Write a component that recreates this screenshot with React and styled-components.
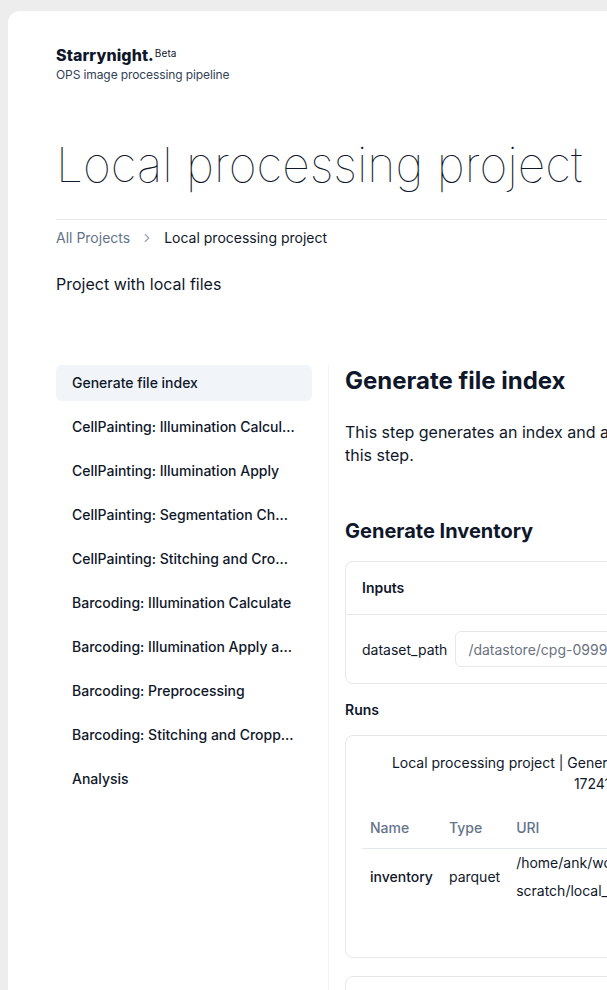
import React from 'react'
import styled, { createGlobalStyle } from 'styled-components'

const GlobalStyle = createGlobalStyle`
    html, body {
        margin: 0;
        padding: 0;
        background: #ededed;
        overflow: hidden;
    }
    body {
        font-family: Inter, "Noto Sans", sans-serif;
        color: #0f172a;
        -webkit-font-smoothing: antialiased;
    }
    * {
        box-sizing: border-box;
    }
`

const steps = [
    'Generate file index',
    'CellPainting: Illumination Calculate',
    'CellPainting: Illumination Apply',
    'CellPainting: Segmentation Check',
    'CellPainting: Stitching and Cropping',
    'Barcoding: Illumination Calculate',
    'Barcoding: Illumination Apply and Align',
    'Barcoding: Preprocessing',
    'Barcoding: Stitching and Cropping',
    'Analysis',
]

function ChevronRight() {
    return (
        <svg width="14" height="14" viewBox="0 0 24 24" fill="none" stroke="currentColor" strokeWidth="2" strokeLinecap="round" strokeLinejoin="round">
            <path d="m9 18 6-6-6-6" />
        </svg>
    )
}

function App() {
    return (
        <Page>
            <GlobalStyle />
            <Shell>
                <Brand>
                    <h1>Starrynight.<sup>Beta</sup></h1>
                    <p>OPS image processing pipeline</p>
                </Brand>

                <Title>Local processing project</Title>

                <Breadcrumb>
                    <a>All Projects</a>
                    <span className="sep"><ChevronRight /></span>
                    <span className="current">Local processing project</span>
                </Breadcrumb>

                <Description>Project with local files</Description>

                <Layout>
                    <Sidebar>
                        {steps.map((s, i) => (
                            <StepItem key={s} active={i === 0}>{s}</StepItem>
                        ))}
                    </Sidebar>

                    <Main>
                        <h2>Generate file index</h2>
                        <p className="intro">
                            This step generates an index and an inventory of dataset files for<br />
                            this step.
                        </p>

                        <h3>Generate Inventory</h3>

                        <Card>
                            <CardHeader>Inputs</CardHeader>
                            <InputRow>
                                <label>dataset_path</label>
                                <Field placeholder="/datastore/cpg-0999-local-project/images" readOnly />
                            </InputRow>
                        </Card>

                        <SectionLabel>Runs</SectionLabel>

                        <RunCard>
                            <Caption>
                                <span>Local processing project | Generate file index | Generate Inventory</span>
                                <span>1724171837</span>
                            </Caption>
                            <RunTable>
                                <thead>
                                    <tr>
                                        <th>Name</th>
                                        <th>Type</th>
                                        <th>URI</th>
                                    </tr>
                                </thead>
                                <tbody>
                                    <tr>
                                        <td className="name">inventory</td>
                                        <td>parquet</td>
                                        <td>/home/ank/workspace/starrynight-scratch/local_processing_project/index/inventory.parquet</td>
                                    </tr>
                                </tbody>
                            </RunTable>
                        </RunCard>

                        <RunCard />
                    </Main>
                </Layout>
            </Shell>
        </Page>
    )
}

const Page = styled.div`
    padding: 11px 0 0 8px;
    width: 1400px;
`

const Shell = styled.div`
    width: 1200px;
    min-height: 1100px;
    background: #ffffff;
    border-radius: 12px 12px 0 0;
    padding: 32px 48px 48px;
`

const Brand = styled.div`
    h1 {
        margin: 0;
        font-size: 16px;
        line-height: 24px;
        font-weight: 800;
        color: #0f172a;
        letter-spacing: 0.1px;
    }
    sup {
        font-size: 10px;
        font-weight: 400;
        margin-left: 1px;
        vertical-align: 4px;
        line-height: 0;
    }
    p {
        margin: 0;
        font-size: 12px;
        line-height: 16px;
        color: #334155;
        letter-spacing: -0.1px;
    }
`

const Title = styled.h1`
    margin: 58px 0 0;
    padding-bottom: 30px;
    font-size: 48px;
    line-height: 48px;
    font-weight: 100;
    color: #0f172a;
    border-bottom: 1px solid #e5e7eb;
`

const Breadcrumb = styled.nav`
    display: flex;
    align-items: center;
    gap: 10px;
    margin-top: 8px;
    font-size: 14px;
    line-height: 20px;
    a {
        color: #64748b;
    }
    .sep {
        display: flex;
        color: #94a3b8;
    }
    .current {
        color: #0f172a;
    }
`

const Description = styled.p`
    margin: 24px 0 0;
    font-size: 16px;
    line-height: 24px;
    color: #0f172a;
`

const Layout = styled.div`
    display: flex;
    margin-top: 69px;
`

const Sidebar = styled.nav`
    width: 256px;
    flex-shrink: 0;
    display: flex;
    flex-direction: column;
    gap: 8px;
    margin-right: 16px;
`

const StepItem = styled.div`
    height: 36px;
    line-height: 36px;
    padding: 0 16px;
    border-radius: 6px;
    font-size: 14px;
    font-weight: 500;
    color: #0f172a;
    background: ${props => (props.active ? '#f1f5f9' : 'transparent')};
    white-space: nowrap;
    overflow: hidden;
    text-overflow: ellipsis;
`

const Main = styled.main`
    width: 550px;
    border-left: 1px solid #f1f5f9;
    padding-left: 16px;
    min-height: 700px;
    h2 {
        margin: 0;
        font-size: 24px;
        line-height: 32px;
        font-weight: 700;
    }
    .intro {
        margin: 24px 0 0;
        font-size: 16px;
        line-height: 23px;
        color: #0f172a;
    }
    h3 {
        margin: 50px 0 16px;
        font-size: 20px;
        line-height: 28px;
        font-weight: 700;
    }
`

const Card = styled.div`
    border: 1px solid #e5e7eb;
    border-radius: 8px;
`

const CardHeader = styled.div`
    padding: 16px;
    font-size: 14px;
    line-height: 20px;
    font-weight: 600;
    border-bottom: 1px solid #e5e7eb;
`

const InputRow = styled.div`
    display: flex;
    align-items: center;
    gap: 8px;
    padding: 16px;
    label {
        font-size: 14px;
        color: #0f172a;
        white-space: nowrap;
    }
`

const Field = styled.input`
    flex: 1;
    height: 36px;
    border: 1px solid #e5e7eb;
    border-radius: 6px;
    padding: 0 12px;
    font-family: inherit;
    font-size: 14px;
    color: #0f172a;
    outline: none;
    &::placeholder {
        color: #6b7280;
    }
`

const SectionLabel = styled.div`
    margin: 16px 0 15px;
    font-size: 14px;
    line-height: 20px;
    font-weight: 600;
`

const RunCard = styled.div`
    border: 1px solid #e5e7eb;
    border-radius: 8px;
    padding: 16px 16px 52px;
    margin-bottom: 18px;
    min-height: 60px;
`

const Caption = styled.div`
    display: flex;
    flex-direction: column;
    align-items: center;
    text-align: center;
    font-size: 14px;
    line-height: 21px;
    color: #0f172a;
    margin-bottom: 14px;
`

const RunTable = styled.table`
    width: 100%;
    border-collapse: collapse;
    font-size: 14px;
    th {
        height: 40px;
        padding: 0 8px;
        text-align: left;
        font-weight: 500;
        color: #64748b;
        border-bottom: 1px solid #e2e8f0;
    }
    td {
        padding: 0 8px;
        line-height: 28px;
        vertical-align: middle;
        color: #0f172a;
    }
    .name {
        font-weight: 500;
    }
`

export default App
